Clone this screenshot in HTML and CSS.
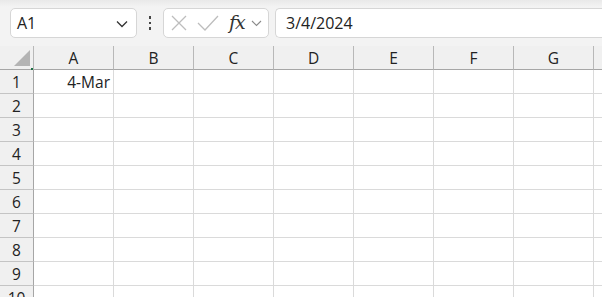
FILE: index.html
```html
<!DOCTYPE html>
<html lang="en">

<head>
    <meta charset="UTF-8">
    <meta name="viewport" content="width=device-width, initial-scale=1.0">
    <title>Sheet</title>
    <link rel="stylesheet" href="styles.css">
</head>

<body>
    <div class="toolbar">
        <div class="name-box">
            <span>A1</span>
            <svg class="chev" width="12" height="8" viewBox="0 0 12 8"><path d="M1 1.5 L6 6.5 L11 1.5" fill="none" stroke="#333" stroke-width="1.3"/></svg>
        </div>
        <div class="dots"><i></i><i></i><i></i></div>
        <div class="fx-box">
            <svg width="18" height="18" viewBox="0 0 18 18"><path d="M2 2 L16 16 M16 2 L2 16" stroke="#bdbdbd" stroke-width="1.3" fill="none"/></svg>
            <svg width="22" height="18" viewBox="0 0 22 18"><path d="M1 9 L8 16 L21 2" stroke="#bdbdbd" stroke-width="1.3" fill="none"/></svg>
            <span class="fx">fx</span>
            <svg class="small-chev" width="11" height="7" viewBox="0 0 11 7"><path d="M1 1 L5.5 5.5 L10 1" fill="none" stroke="#8a8a8a" stroke-width="1.1"/></svg>
        </div>
        <div class="formula">3/4/2024</div>
    </div>

    <div class="sheet">
        <div class="corner"><span class="tri"></span><span class="dot"></span></div>
        <div class="col-head">A</div>
        <div class="col-head">B</div>
        <div class="col-head">C</div>
        <div class="col-head">D</div>
        <div class="col-head">E</div>
        <div class="col-head">F</div>
        <div class="col-head">G</div>
        <div class="col-head last"></div>
    </div>

    <script>
        var sheet = document.querySelector('.sheet');
        for (var r = 1; r <= 10; r++) {
            var html = '<div class="row-head">' + r + '</div>';
            for (var c = 0; c < 8; c++) {
                var txt = (r === 1 && c === 0) ? '4-Mar' : '';
                html += '<div class="cell' + (c === 7 ? ' last' : '') + '">' + txt + '</div>';
            }
            sheet.insertAdjacentHTML('beforeend', html);
        }
    </script>
</body>

</html>
```

FILE: styles.css
```css
body {
    margin: 0;
    font-family: "Open Sans", "Noto Sans", sans-serif;
    background: #f0f0f0;
    overflow: hidden;
    height: 297px;
}

.toolbar {
    height: 46px;
    box-sizing: border-box;
    padding: 8px 0 0 10px;
    display: flex;
    align-items: flex-start;
    background: linear-gradient(#e9e9e9 0, #f3f3f3 7px, #f3f3f3 100%);
}

.name-box {
    width: 127px;
    height: 30px;
    box-sizing: border-box;
    background: #fff;
    border: 1px solid #d6d6d6;
    border-radius: 5px;
    display: flex;
    align-items: center;
    justify-content: space-between;
    padding: 0 8px 0 6px;
    font-size: 16px;
    color: #222;
}

.chev {
    margin-top: 1px;
}

.dots {
    width: 26px;
    height: 30px;
    display: flex;
    flex-direction: column;
    align-items: center;
    justify-content: center;
    gap: 3px;
}

.dots i {
    display: block;
    width: 2.5px;
    height: 2.5px;
    background: #444;
}

.fx-box {
    width: 106px;
    height: 30px;
    box-sizing: border-box;
    background: #fff;
    border: 1px solid #d6d6d6;
    border-radius: 5px;
    display: flex;
    align-items: center;
    padding: 0 0 0 6px;
    gap: 9px;
}

.fx {
    font-family: "DejaVu Serif", "Liberation Serif", serif;
    font-style: italic;
    font-size: 19px;
    color: #333;
    margin-left: 1px;
    margin-top: -3px;
    letter-spacing: -1px;
}

.small-chev {
    margin-left: -3px;
}

.formula {
    flex: 1;
    margin-left: 6px;
    height: 30px;
    box-sizing: border-box;
    background: #fff;
    border: 1px solid #d6d6d6;
    border-right: none;
    border-radius: 5px 0 0 5px;
    padding: 0 0 0 10px;
    line-height: 28px;
    font-size: 16px;
    color: #222;
}

.sheet {
    display: grid;
    grid-template-columns: 34px repeat(7, 80px) 1fr;
    grid-auto-rows: 24px;
    background: #fff;
    font-size: 15.5px;
    color: #222;
}

.corner,
.col-head {
    background: #f0f0f0;
    border-bottom: 1px solid #a6a6a6;
}

.corner {
    position: relative;
    border-right: 1px solid #b8b8b8;
}

.tri {
    position: absolute;
    right: 3px;
    bottom: 3px;
    width: 0;
    height: 0;
    border-left: 16px solid transparent;
    border-bottom: 16px solid #b4b4b4;
}

.dot {
    position: absolute;
    right: 0;
    bottom: -1px;
    width: 2px;
    height: 2px;
    background: #1e7145;
}

.col-head {
    border-right: 1px solid #b8b8b8;
    text-align: center;
    line-height: 24px;
    color: #222;
}

.row-head {
    background: #f0f0f0;
    border-right: 1px solid #a6a6a6;
    border-bottom: 1px solid #c4c4c4;
    text-align: center;
    line-height: 24px;
}

.cell {
    border-right: 1px solid #dadada;
    border-bottom: 1px solid #dadada;
    text-align: right;
    padding-right: 3px;
    line-height: 24px;
}

.col-head.last,
.cell.last {
    border-right: none;
}
```
